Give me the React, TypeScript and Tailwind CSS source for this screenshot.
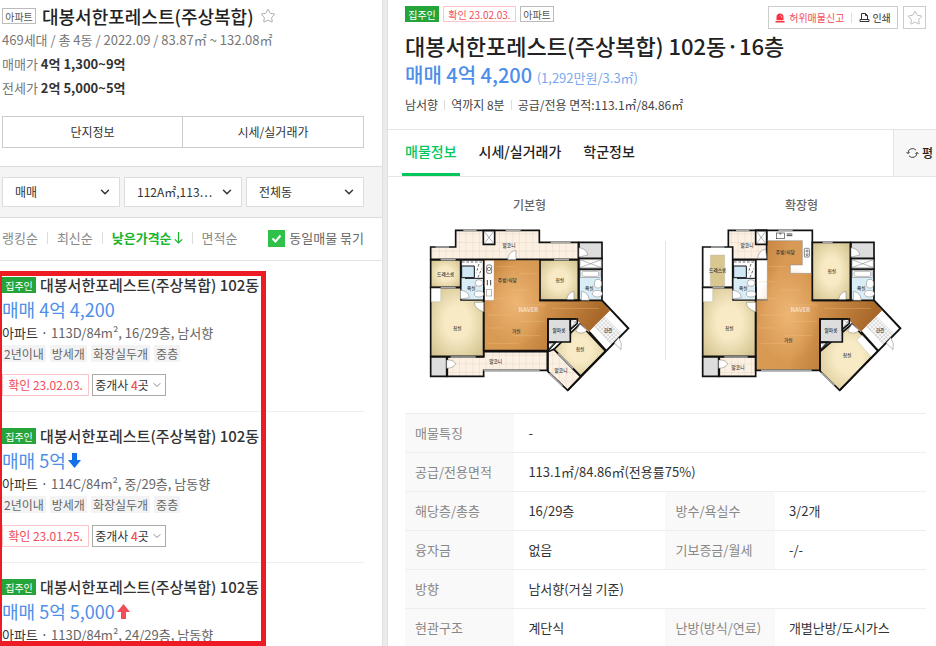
import type { ReactNode } from "react";
import { ChevronDown, Star } from "lucide-react";

const listings = [
  { price: "매매 4억 4,200", trend: "", spec: "113D/84m², 16/29층, 남서향", date: "23.02.03." },
  { price: "매매 5억", trend: "down", spec: "114C/84m², 중/29층, 남동향", date: "23.01.25." },
  { price: "매매 5억 5,000", trend: "up", spec: "113D/84m², 24/29층, 남동향", date: "23.02.03." },
];

const tags = ["2년이내", "방세개", "화장실두개", "중층"];

const details = [
  ["매물특징", "-"],
  ["공급/전용면적", "113.1㎡/84.86㎡(전용률75%)"],
  ["해당층/총층", "16/29층", "방수/욕실수", "3/2개"],
  ["융자금", "없음", "기보증금/월세", "-/-"],
  ["방향", "남서향(거실 기준)"],
  ["현관구조", "계단식", "난방(방식/연료)", "개별난방/도시가스"],
];

function OwnerBadge() {
  return (
    <span className="flex h-4 w-[34px] shrink-0 items-center justify-center bg-[#25a43a] text-[10px] text-white">
      집주인
    </span>
  );
}

function TypeBadge() {
  return (
    <span className="flex h-4 w-[34px] shrink-0 items-center justify-center border border-[#bbb] text-[10px] text-[#555]">
      아파트
    </span>
  );
}

function TrendArrow({ trend }: { trend: string }) {
  if (!trend) return null;
  return (
    <svg viewBox="0 0 13 15" className="h-[15px] w-[13px]">
      {trend === "down" ? (
        <path d="M4 0h5v7h4L6.500 15 0 7h4z" fill="#1271e8" />
      ) : (
        <path d="M4 15h5V8h4L6.500 0 0 8h4z" fill="#f34c59" />
      )}
    </svg>
  );
}

function Filter({ label, value }: { label: string; value: string }) {
  return (
    <div className="relative flex-1">
      <select
        aria-label={label}
        className="h-[30px] w-full appearance-none rounded-none border border-[#ddd] bg-white pl-3 text-xs text-[#333]"
      >
        <option>{value}</option>
      </select>
      <ChevronDown className="pointer-events-none absolute top-2 right-2 size-3.5 text-[#333]" strokeWidth={2.500} />
    </div>
  );
}

function Listing({ item }: { item: (typeof listings)[number] }) {
  return (
    <li className="mr-[18px] h-[151px] border-b border-[#eee] pt-3.5 pl-0.5">
      <div className="flex h-5 items-center gap-1">
        <OwnerBadge />
        <h3 className="text-[15px] leading-5 font-medium whitespace-nowrap text-[#333]">대봉서한포레스트(주상복합) 102동</h3>
      </div>
      <div className="mt-0.5 flex h-6 items-center gap-0.5 text-lg leading-6 text-[#4d8fe8]">
        {item.price}
        <TrendArrow trend={item.trend} />
      </div>
      <p className="mt-0.5 text-[13px] leading-5 text-[#666]">
        <span className="text-[#333]">아파트 ·</span> {item.spec}
      </p>
      <div className="mt-0.5 flex gap-1">
        {tags.map((tag) => (
          <span key={tag} className="bg-[#f3f3f3] px-0.5 text-xs leading-[17px] text-[#666]">
            {tag}
          </span>
        ))}
      </div>
      <div className="mt-3 flex h-[22px] gap-[3px] text-xs">
        <span className="flex w-[87px] items-center justify-center border border-[#fcc5c9] text-[#f34c59]">
          확인 {item.date}
        </span>
        <button className="flex w-[74px] items-center justify-center border border-[#aaa] text-[#333]">
          중개사&nbsp;<b className="font-medium text-[#f34c59]">4</b>곳
          <ChevronDown className="ml-0.5 size-3 text-[#888]" strokeWidth={2} />
        </button>
      </div>
    </li>
  );
}

function Sidebar() {
  return (
    <aside className="relative flex w-[382px] shrink-0 flex-col overflow-hidden bg-white">
      <div className="pt-1 pr-[18px] pb-[18px] pl-0.5">
        <div className="flex h-6 items-center gap-1.5">
          <TypeBadge />
          <h2 className="text-lg leading-6 font-medium text-[#222]">대봉서한포레스트(주상복합)</h2>
          <button aria-label="관심단지">
            <Star className="size-4 text-[#aaa]" strokeWidth={1.500} />
          </button>
        </div>
        <p className="text-[13px] leading-6 text-[#777]">469세대 / 총 4동 / 2022.09 / 83.87㎡ ~ 132.08㎡</p>
        <p className="text-[13px] leading-6 text-[#777]">
          매매가 <b className="text-[#333]">4억 1,300~9억</b>
        </p>
        <p className="text-[13px] leading-6 text-[#777]">
          전세가 <b className="text-[#333]">2억 5,000~5억</b>
        </p>
        <div className="mt-4 grid h-8 grid-cols-2 divide-x divide-[#ccc] border border-[#ccc] text-xs text-[#333]">
          <button>단지정보</button>
          <button>시세/실거래가</button>
        </div>
      </div>
      <div className="flex h-[52px] shrink-0 gap-1 border-y border-[#ddd] bg-[#f4f4f4] pt-2.5 pr-[18px] pl-0.5">
        <Filter label="거래유형" value="매매" />
        <Filter label="면적" value="112A㎡,113⋯" />
        <Filter label="동" value="전체동" />
      </div>
      <div className="flex h-[43px] shrink-0 items-center justify-between border-b border-[#e5e5e5] pr-[18px] pb-0.5 pl-0.5 text-[13px] text-[#888]">
        <div className="flex items-center gap-[9px]">
          <button>랭킹순</button>
          <i className="h-3 w-px bg-[#ddd]" />
          <button>최신순</button>
          <i className="h-3 w-px bg-[#ddd]" />
          <button className="flex items-center gap-0.5 font-bold text-[#19b52c]">
            낮은가격순
            <svg viewBox="0 0 9 12" className="h-3 w-[9px]" fill="none" stroke="#19b52c" strokeWidth="1.200">
              <path d="M4.500 0v11M.8 7.300l3.700 3.700 3.700-3.700" />
            </svg>
          </button>
          <i className="h-3 w-px bg-[#ddd]" />
          <button>면적순</button>
        </div>
        <label className="flex items-center gap-1 text-[#666]">
          <span className="relative flex size-[17px]">
            <input type="checkbox" defaultChecked className="size-full appearance-none bg-[#2fc14a]" />
            <svg viewBox="0 0 17 17" className="pointer-events-none absolute inset-0" fill="none" stroke="#fff" strokeWidth="2">
              <path d="M4.500 8.500l3 3 5-6" />
            </svg>
          </span>
          동일매물 묶기
        </label>
      </div>
      <ul className="min-h-0 flex-1 overflow-y-auto [scrollbar-width:none]">
        {listings.map((item) => (
          <Listing key={item.price} item={item} />
        ))}
      </ul>
      {/* highlight around the listings of the same building */}
      <div className="pointer-events-none absolute top-[271px] bottom-0 left-0 w-[266px] border-5 border-l-2 border-[#ed1c24]" />
    </aside>
  );
}

function Label({ x, y, children }: { x: number; y: number; children: string }) {
  return (
    <text x={x} y={y} fontSize="14" fontWeight="500" fill="#333" textAnchor="middle">
      {children}
    </text>
  );
}

function PlanDefs({ id }: { id: string }) {
  return (
    <defs>
      <radialGradient id={`${id}-room`} r="0.8">
        <stop offset="0.3" stopColor="#f7eac4" />
        <stop offset="1" stopColor="#c8b67e" />
      </radialGradient>
      <linearGradient id={`${id}-wood`} x1="0" y1="0" x2="1" y2="0.4">
        <stop offset="0" stopColor="#bf7d38" />
        <stop offset="0.25" stopColor="#d99a55" />
        <stop offset="0.55" stopColor="#d79850" />
        <stop offset="1" stopColor="#a8682a" />
      </linearGradient>
      <radialGradient id={`${id}-shine`}>
        <stop offset="0" stopColor="#efb878" stopOpacity="0.9" />
        <stop offset="1" stopColor="#efb878" stopOpacity="0" />
      </radialGradient>
      <pattern id={`${id}-tile`} width="20" height="26" patternUnits="userSpaceOnUse">
        <rect width="20" height="26" fill="#fbf0e2" />
        <path d="M0 0H20M0 0V26" stroke="#dfcfbf" strokeWidth="2" />
      </pattern>
      <pattern id={`${id}-check`} width="12" height="12" patternUnits="userSpaceOnUse">
        <rect width="12" height="12" fill="#f8f8f8" />
        <path d="M0 0h6v6H0zM6 6h6v6H6z" fill="#ddd" />
      </pattern>
    </defs>
  );
}

// rooms that are the same in both layouts: master room, two baths, utility, entrance
function SharedRooms({ id }: { id: string }) {
  return (
    <>
      <g stroke="#111" strokeWidth="5">
        <path d="M35 293H194V499H35z" fill={`url(#${id}-room)`} />
        <path d="M126 210H194V330H126z" fill="#fff" />
        <path d="M480 237H549V331H480z" fill="#d9edf6" />
        <path d="M480 205H549V237H480z" fill="#fff" />
        <path d="M480 157H549V205H480z" fill="#ddd" />
        <path d="M387 387H454V456H387z" fill="#ddd" />
        <path d="M454 387H475V400L454 418zM387 457H410L387 482z" fill="#fff" />
        <path d="M35 501H83V559H35z" fill="#ddd" />
      </g>
      <path d="M37 295H65V335H37z" fill="#fff" stroke="#aaa" />
      <path d="M128 265H192V328H128z" fill="#d9edf6" />
      <path d="M128 228H166V263H128z" fill="#cfe7f3" stroke="#111" strokeWidth="3" />
      <path d="M129 216H190M180 222L172 248M177 262L188 236" stroke="#222" strokeWidth="2" strokeDasharray="8 5" fill="none" />
      <path d="M138 265H192" stroke="#111" strokeWidth="3" />
      <g fill="#fff" stroke="#777" strokeWidth="1.500">
        <ellipse cx="180" cy="279" rx="12" ry="10" />
        <ellipse cx="180" cy="312" rx="14" ry="9" />
        <ellipse cx="537" cy="281" rx="11" ry="13" />
        <ellipse cx="535" cy="311" rx="15" ry="10" />
        <rect x="485" y="241" width="58" height="21" />
        <rect x="489" y="244" width="50" height="15" rx="4" />
        <path d="M483 209H547V233H483zL547 233M547 209L483 233" />
        <path d="M457 390L473 400M473 390L457 412M390 460L404 464M391 476L407 459" />
        <path d="M124 327V301Q149 302 151 323z" />
        <path d="M194 337H166Q167 359 194 365z" />
        <path d="M487 331V304Q508 307 511 331z" />
        <path d="M480 173Q501 175 507 195L480 201z" />
        <path d="M83 510Q105 508 110 522Q101 535 83 535z" />
      </g>
      <path d="M573 362L628 415L562 482L510 425z" fill="#fff" />
      <path d="M556 380L610 433L579 465L526 408z" fill={`url(#${id}-check)`} stroke="#aaa" strokeWidth="1" />
      <path d="M549 331L628 415L446 601M510 425L561 482" fill="none" stroke="#111" strokeWidth="6" />
      <path d="M586 459L599 443Q611 461 606 479z" fill="#fff" stroke="#777" strokeWidth="1.500" />
      <Label x={115} y={420}>침실</Label>
      <Label x={157} y={300}>욕실</Label>
      <Label x={511} y={300}>욕실</Label>
      <Label x={420} y={425}>알파룸</Label>
      <Label x={567} y={427}>현관</Label>
    </>
  );
}

function FloorBoards() {
  return (
    <path
      d="M232 230H285M300 251H355M205 275H250M270 300H330M198 325H260M290 345H380M400 355H540M205 375H270M300 394H380M200 414H250M280 437H365M210 460H300"
      stroke="#f5c78d"
      strokeWidth="2"
      opacity="0.5"
    />
  );
}

function BasicPlan() {
  return (
    <svg viewBox="30 117 603 492" className="h-[164px] w-[201px]" role="img" aria-label="기본형 평면도">
      <PlanDefs id="basic" />
      <path d="M194 210H361V331H549L573 362L510 425L471 387H387V482H194z" fill="url(#basic-wood)" />
      <ellipse cx="290" cy="340" rx="95" ry="130" fill="url(#basic-shine)" />
      <FloorBoards />
      <g stroke="#111" strokeWidth="5">
        <path d="M35 171H110V121H361V157H478V208H35z" fill="url(#basic-tile)" />
        <path d="M35 210H125V292H35z" fill="url(#basic-room)" />
        <path d="M363 210H478V331H363z" fill="url(#basic-room)" />
        <path d="M85 501H194V485H385V541H194V559H85z" fill="url(#basic-tile)" />
        <path d="M387 485L405 478L485 560L446 601L387 545z" fill="url(#basic-tile)" />
        <path d="M483 402L559 483L485 558L405 478z" fill="url(#basic-room)" />
        <path d="M193 122H227V163H193z" fill="#fff" />
      </g>
      <path d="M197 126L223 159M223 126L197 159" stroke="#666" strokeWidth="1.500" />
      <path d="M196 212H225V331H196z" fill="#fff" stroke="#999" />
      <g fill="none" stroke="#444" strokeWidth="2">
        <rect x="203" y="225" width="15" height="25" rx="4" />
        <circle cx="210" cy="237" r="5" />
        <path d="M205 270V286M215 270V286" strokeWidth="3" />
        <rect x="202" y="299" width="16" height="19" stroke="#999" />
      </g>
      <SharedRooms id="basic" />
      <g fill="#fff" stroke="#777" strokeWidth="1.500">
        <path d="M266 209Q268 184 291 181V209z" />
        <path d="M465 331V304Q445 307 443 331z" />
        <path d="M470 423L483 402L504 421Q488 437 470 423z" />
      </g>
      <path d="M361 331H478M387 482V387H471M194 330V336M194 366V482H385" fill="none" stroke="#111" strokeWidth="5" />
      <path d="M194 541H362M391 550L430 588M395 157H455M260 121H305M133 121H173M95 501H170M50 171H90M65 293H110M65 209H110M405 209H450" stroke="#aaa" strokeWidth="5" />
      <path d="M418 490L462 535" stroke="#aaa" strokeWidth="5" />
      <text x="328" y="367" fontSize="18" fontWeight="700" fill="#fff" opacity="0.6" textAnchor="middle">NAVER</text>
      <Label x={270} y={170}>발코니</Label>
      <Label x={80} y={258}>드레스룸</Label>
      <Label x={265} y={275}>주방/식당</Label>
      <Label x={422} y={276}>침실</Label>
      <Label x={292} y={430}>거실</Label>
      <Label x={230} y={519}>발코니</Label>
      <Label x={483} y={484}>침실</Label>
      <Label x={426} y={545}>발코니</Label>
    </svg>
  );
}

function ExtendedPlan() {
  return (
    <svg viewBox="30 117 603 492" className="h-[164px] w-[201px]" role="img" aria-label="확장형 평면도">
      <PlanDefs id="ext" />
      <path d="M194 121H364V331H194z" fill="#fff" stroke="#111" strokeWidth="5" />
      <path d="M229 152H334V225H298V250H362V331H549L573 362L510 425L471 387H387V541H194V331H229z" fill="url(#ext-wood)" />
      <ellipse cx="290" cy="370" rx="95" ry="150" fill="url(#ext-shine)" />
      <FloorBoards />
      <g stroke="#111" strokeWidth="5">
        <path d="M112 121H227V208H112z" fill="url(#ext-tile)" />
        <path d="M35 171H125V292H35z" fill="#fff" />
        <path d="M364 157H478V331H364z" fill="url(#ext-room)" />
        <path d="M85 501H194V559H85z" fill="url(#ext-tile)" />
        <path d="M483 402L559 483L446 601L387 543V485z" fill="url(#ext-room)" />
        <path d="M194 122H227V163H194z" fill="#fff" />
      </g>
      <path d="M58 195H101V290H58z" fill="#d8c78f" stroke="#aaa" />
      <path d="M198 126L223 159M223 126L198 159" stroke="#666" strokeWidth="1.500" />
      <path d="M497 450L513 435L557 482L540 500z" fill="#fff" stroke="#aaa" />
      <path d="M229 152H334V225H298V250H362M196 210V331H229V210" fill="none" stroke="#888" strokeWidth="1.500" />
      <g fill="none" stroke="#444" strokeWidth="2">
        <rect x="256" y="129" width="24" height="17" />
        <circle cx="268" cy="131" r="2" />
        <path d="M287 132H304M287 137H304" strokeWidth="3" />
        <rect x="340" y="175" width="15" height="26" rx="3" />
        <circle cx="348" cy="183" r="3" />
        <circle cx="348" cy="194" r="3" />
      </g>
      <SharedRooms id="ext" />
      <g fill="#fff" stroke="#777" strokeWidth="1.500">
        <path d="M227 205H200Q202 182 224 177z" />
        <path d="M465 331V304Q445 307 443 331z" />
        <path d="M470 423L483 402L504 421Q488 437 470 423z" />
      </g>
      <path d="M364 331H478M387 541V387H471M194 366V541H390" fill="none" stroke="#111" strokeWidth="5" />
      <path d="M210 541H362M391 548L430 586M395 157H425M262 121H305M135 121H175M100 501H170M60 171H100M65 293H100" stroke="#aaa" strokeWidth="5" />
      <text x="328" y="367" fontSize="18" fontWeight="700" fill="#fff" opacity="0.6" textAnchor="middle">NAVER</text>
      <Label x={168} y={171}>발코니</Label>
      <Label x={80} y={245}>드레스룸</Label>
      <Label x={283} y={192}>주방/식당</Label>
      <Label x={422} y={249}>침실</Label>
      <Label x={292} y={455}>거실</Label>
      <Label x={141} y={536}>발코니</Label>
      <Label x={468} y={502}>침실</Label>
    </svg>
  );
}

function PlanFigure({ title, children }: { title: string; children: ReactNode }) {
  return (
    <figure className="flex flex-col items-center gap-3.5">
      <figcaption className="text-xs leading-5 font-medium text-[#666]">{title}</figcaption>
      {children}
    </figure>
  );
}

function Header() {
  return (
    <header className="h-[129px] pt-1.5 pr-2.5 pl-[17px]">
      <div className="flex items-start justify-between">
        <div className="flex gap-1">
          <OwnerBadge />
          <span className="flex h-4 w-[73px] items-center justify-center border border-[#fcc5c9] text-[10px] whitespace-nowrap text-[#f34c59]">
            확인 23.02.03.
          </span>
          <TypeBadge />
        </div>
        <div className="-mb-2 flex h-[23px] gap-[5px]">
          <div className="flex w-[130px] items-center justify-center gap-[7px] border border-[#ccc] text-[10px]">
            <button className="flex items-center gap-1 text-[#f34c59]">
              <svg viewBox="0 0 10 10" className="size-2.5" fill="#fa323f">
                <path d="M1.500 7.300V4a3.500 3.500 0 0 1 7 0v3.300zM.5 8h9v1.500h-9z" />
                <path d="M5.500 2.200L7 4.500" stroke="#fff" strokeWidth="0.800" />
              </svg>
              허위매물신고
            </button>
            <i className="h-2.5 w-px bg-[#ddd]" />
            <button className="flex items-center gap-0.5 text-[#333]">
              <svg viewBox="0 0 11 11" className="size-[11px]" fill="none" stroke="#333">
                <path d="M2.500 7.500v-6h4l2 2v4M6.500 1.500v2h2M1 7.500v2h9v-2z" />
              </svg>
              인쇄
            </button>
          </div>
          <button aria-label="관심매물" className="flex w-[23px] items-center justify-center border border-[#ccc]">
            <Star className="size-4 text-[#bbb]" strokeWidth={1.500} />
          </button>
        </div>
      </div>
      <h1 className="mt-2 text-[22px] leading-[30px] font-medium text-[#222]">
        대봉서한포레스트(주상복합) 102동·16층
      </h1>
      <p className="text-xl leading-[30px] font-medium text-[#4d8fe8]">
        매매 4억 4,200 <span className="text-[13px] font-normal text-[#7ba9ee]">(1,292만원/3.3㎡)</span>
      </p>
      <p className="mt-0.5 flex items-center gap-1.5 text-xs leading-5 text-[#444]">
        남서향
        <i className="h-2.5 w-px bg-[#ddd]" />
        역까지 8분
        <i className="h-2.5 w-px bg-[#ddd]" />
        공급/전용 면적:113.1㎡/84.86㎡
      </p>
    </header>
  );
}

export default function App() {
  return (
    <div className="flex h-screen overflow-hidden bg-white font-['Noto_Sans_CJK_KR',sans-serif]">
      <Sidebar />
      <div className="w-1.5 shrink-0 border-x border-[#e0e0e0] bg-[#ebebeb]" />
      <main className="min-w-0 flex-1 overflow-y-auto [scrollbar-width:none]">
        <Header />
        <nav className="flex h-12 items-stretch justify-between border-y border-[#e5e5e5] pl-3.5 text-sm font-medium">
          <div className="flex gap-4">
            <a href="#info" className="border-b-3 border-[#03c75a] px-[3px] leading-[42px] text-[#03c75a]">매물정보</a>
            <a href="#price" className="px-[3px] leading-[42px] text-[#222]">시세/실거래가</a>
            <a href="#school" className="px-[3px] leading-[42px] text-[#222]">학군정보</a>
          </div>
          <button className="flex w-[43px] items-center gap-[3px] border-l border-[#e5e5e5] bg-[#f7f7f7] pl-3 text-xs text-[#222]">
            <svg viewBox="0 0 13 12" className="h-3 w-[13px] shrink-0" fill="none" stroke="#444">
              <path d="M2 6.500V6a4.500 4.500 0 0 1 8-2.800M11 5.500V6a4.500 4.500 0 0 1-8 2.800" />
              <path d="M.5 5L2 6.700 3.700 5M9.300 7L11 5.300 12.500 7" />
            </svg>
            평
          </button>
        </nav>
        <section className="flex items-end justify-center gap-[35px] pt-[18px] pr-2.5 pl-[17px]">
          <PlanFigure title="기본형">
            <BasicPlan />
          </PlanFigure>
          <i className="mb-[33px] h-[119px] w-px bg-[#e5e5e5]" />
          <PlanFigure title="확장형">
            <ExtendedPlan />
          </PlanFigure>
        </section>
        <div className="pt-5 pr-2.5 pl-[17px]">
          <table className="w-full table-fixed border-collapse text-left text-[13px] leading-5">
            <colgroup>
              <col className="w-[21%]" />
              <col className="w-[29%]" />
              <col className="w-[21%]" />
              <col className="w-[29%]" />
            </colgroup>
            <tbody>
              {details.map(([name, value, name2, value2]) => (
                <tr key={name} className="h-[39px] border-y border-[#eee]">
                  <th scope="row" className="bg-[#f9f9f9] pl-2.5 font-normal text-[#888]">{name}</th>
                  <td colSpan={name2 ? 1 : 3} className="pl-3.5 text-[#333]">{value}</td>
                  {name2 && <th scope="row" className="bg-[#f9f9f9] pl-2.5 font-normal text-[#888]">{name2}</th>}
                  {name2 && <td className="pl-3.5 text-[#333]">{value2}</td>}
                </tr>
              ))}
            </tbody>
          </table>
        </div>
      </main>
    </div>
  );
}
